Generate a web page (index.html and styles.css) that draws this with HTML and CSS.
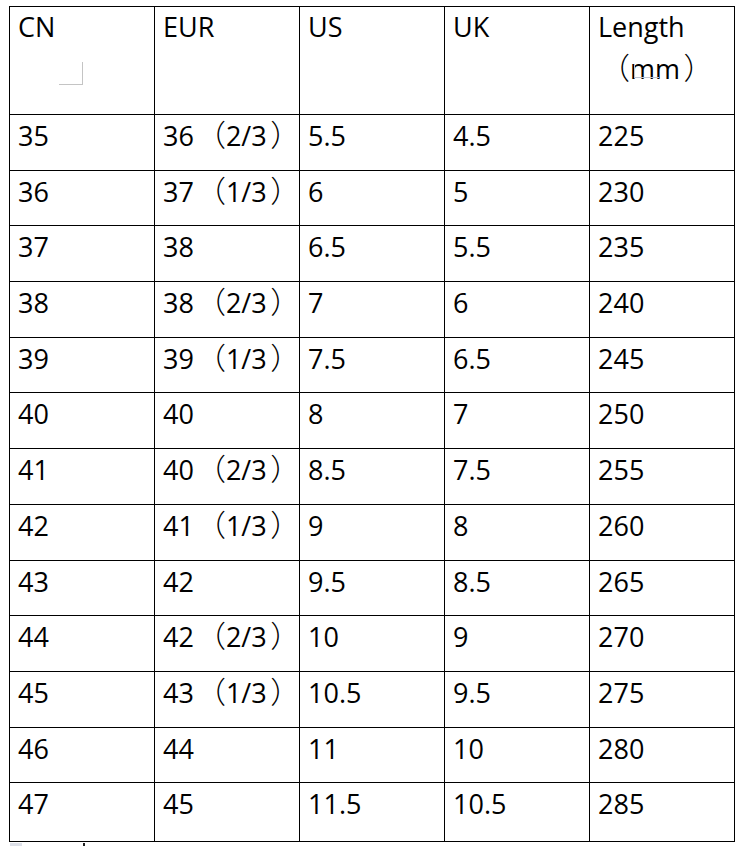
FILE: index.html
```html
<!DOCTYPE html>
<html>
<head>
<meta charset="utf-8">
<link rel="stylesheet" href="styles.css">
</head>
<body>
<table class="size-table">
  <thead>
    <tr class="head-row">
      <th class="cell-cn">CN<span class="cell-mark"></span></th>
      <th>EUR</th>
      <th>US</th>
      <th>UK</th>
      <th><div class="line1">Length</div><div class="line2"><span class="po">（</span><span class="mm">mm<span class="mm-mark"></span></span><span class="pc">）</span></div></th>
    </tr>
  </thead>
  <tbody>
    <tr><td>35</td><td>36<span class="po">（</span>2/3<span class="pc">）</span></td><td>5.5</td><td>4.5</td><td>225</td></tr>
    <tr><td>36</td><td>37<span class="po">（</span>1/3<span class="pc">）</span></td><td>6</td><td>5</td><td>230</td></tr>
    <tr><td>37</td><td>38</td><td>6.5</td><td>5.5</td><td>235</td></tr>
    <tr><td>38</td><td>38<span class="po">（</span>2/3<span class="pc">）</span></td><td>7</td><td>6</td><td>240</td></tr>
    <tr><td>39</td><td>39<span class="po">（</span>1/3<span class="pc">）</span></td><td>7.5</td><td>6.5</td><td>245</td></tr>
    <tr><td>40</td><td>40</td><td>8</td><td>7</td><td>250</td></tr>
    <tr><td>41</td><td>40<span class="po">（</span>2/3<span class="pc">）</span></td><td>8.5</td><td>7.5</td><td>255</td></tr>
    <tr><td>42</td><td>41<span class="po">（</span>1/3<span class="pc">）</span></td><td>9</td><td>8</td><td>260</td></tr>
    <tr><td>43</td><td>42</td><td>9.5</td><td>8.5</td><td>265</td></tr>
    <tr><td>44</td><td>42<span class="po">（</span>2/3<span class="pc">）</span></td><td>10</td><td>9</td><td>270</td></tr>
    <tr><td>45</td><td>43<span class="po">（</span>1/3<span class="pc">）</span></td><td>10.5</td><td>9.5</td><td>275</td></tr>
    <tr><td>46</td><td>44</td><td>11</td><td>10</td><td>280</td></tr>
    <tr class="last-row"><td>47</td><td>45</td><td>11.5</td><td>10.5</td><td>285</td></tr>
  </tbody>
</table>
<div class="foot">
  <span class="foot-grey"></span>
  <span class="foot-tick"></span>
</div>
</body>
</html>
```

FILE: styles.css
```css
html, body {
  margin: 0;
  padding: 0;
  background: #ffffff;
}

body {
  width: 748px;
  height: 846px;
  overflow: hidden;
  font-family: "Open Sans", "Noto Sans CJK SC", sans-serif;
  color: #000000;
}

.size-table {
  margin: 6px 0 0 9px;
  border-collapse: collapse;
  table-layout: fixed;
  width: 726px;
}

.size-table th,
.size-table td {
  width: 145px;
  border: 1px solid #000000;
  padding: 3px 0 0 8px;
  font-size: 27px;
  font-weight: 500;
  line-height: 36px;
  text-align: left;
  vertical-align: top;
  white-space: nowrap;
  box-sizing: border-box;
}

.head-row th {
  height: 108px;
  padding-top: 2px;
}

.size-table tbody tr {
  height: 55.7px;
}

.size-table tbody tr.last-row {
  height: 59px;
}

.po,
.pc {
  display: inline-block;
  font-family: "Noto Sans CJK SC", sans-serif;
  font-size: 30px;
  font-weight: 300;
  line-height: 26px;
}

.po {
  width: 32px;
  text-align: right;
}

.pc {
  width: 37px;
  text-align: center;
}

.cell-cn {
  position: relative;
}

.cell-mark {
  position: absolute;
  left: 49px;
  top: 55px;
  width: 23px;
  height: 22px;
  border-right: 1px solid #c4c4c4;
  border-bottom: 1px solid #c4c4c4;
}

.line2 {
  padding-top: 6px;
}

.mm {
  position: relative;
}

.mm-mark {
  position: absolute;
  left: 4px;
  top: 15px;
  width: 24px;
  height: 12px;
  border-left: 1px solid #c0c4d0;
  border-bottom: 1px solid #c0c4d0;
}

.foot {
  position: relative;
  height: 6px;
}

.foot-grey {
  position: absolute;
  left: 10px;
  top: 1px;
  width: 12px;
  height: 4px;
  background: #dde0e8;
}

.foot-tick {
  position: absolute;
  left: 83px;
  top: 1px;
  width: 2px;
  height: 4px;
  background: #222222;
}
```
